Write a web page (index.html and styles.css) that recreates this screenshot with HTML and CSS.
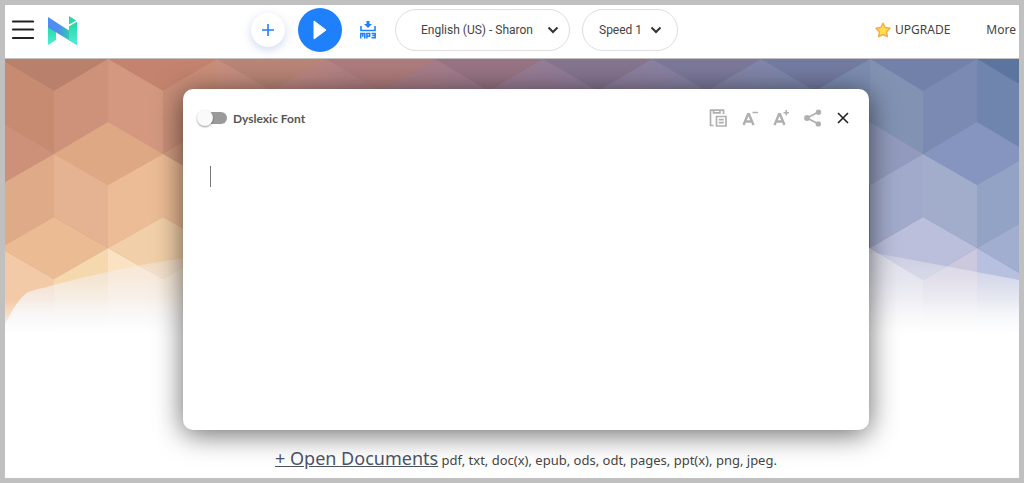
FILE: index.html
```html
<!DOCTYPE html>
<html lang="en">
<head>
<meta charset="utf-8">
<meta name="viewport" content="width=device-width, initial-scale=1">
<title>Text to Speech Reader</title>
<link rel="stylesheet" href="styles.css">
</head>
<body>
<div class="app">
  <header class="topbar">
    <button class="icon-btn menu" aria-label="Menu">
      <svg width="22" height="20" viewBox="0 0 22 20" stroke="#222" stroke-width="2.2" stroke-linecap="round"><path d="M1 1.500h20M1 9.500h20M1 18h20"/></svg>
    </button>
    <a class="logo" href="#" aria-label="Home">
      <svg width="32" height="30" viewBox="0 0 32 30">
        <defs>
          <linearGradient id="lg" x1="0" y1="0" x2="0" y2="1"><stop offset="0" stop-color="#22d8a0"/><stop offset="1" stop-color="#52ecd6"/></linearGradient>
          <linearGradient id="lb" x1="0" y1="0" x2="1" y2="0"><stop offset=".35" stop-color="#4f8df0"/><stop offset=".75" stop-color="#2bcfae"/><stop offset="1" stop-color="#4fe9d2"/></linearGradient>
        </defs>
        <path fill="url(#lg)" d="M1 10 9 14V24L1 29z"/>
        <path fill="url(#lg)" d="M22 10.500 30 6V29L22 24z"/>
        <path fill="url(#lb)" d="M1 1 22 14.500 30 20V29L1 11.500z"/>
        <path fill="url(#lg)" d="M22 10.500 30 6V29L22 24z"/>
        <path fill="#25dca0" d="M22 0 29 4.500 22 8.500z"/>
      </svg>
    </a>
    <div class="controls">
      <button class="add" aria-label="Add">
        <svg width="12" height="12" viewBox="0 0 12 12" stroke="#1e80fa" stroke-width="1.6"><path d="M6 0v12M0 6h12"/></svg>
      </button>
      <button class="play" aria-label="Play">
        <svg width="14" height="20" viewBox="0 0 14 20"><path fill="#fff" stroke="#fff" stroke-linejoin="round" d="M1 1 13 10 1 19z"/></svg>
      </button>
      <button class="icon-btn mp3" aria-label="Download MP3">
        <svg width="16" height="18" viewBox="0 0 16 18" fill="none" stroke="#1e80fa">
          <path stroke-width="1.600" d="M1 5v4.500h14V5"/>
          <path fill="#1e80fa" stroke="none" d="M6.500 0h3v3h2.500L8 7 4 3h2.500z"/>
          <path stroke-width="1.500" d="M.8 17.500v-5h4v5M2.800 12.500v3.200M6.900 17.500v-5h2.800v2.800H6.900M11.500 12.500h3.700v4.300h-3.700M12.300 14.600h2.800"/>
        </svg>
      </button>
      <div class="pick voice">
        <select aria-label="Voice"><option>English (US) - Sharon</option></select>
        <svg class="chevron" width="12" height="8" viewBox="0 0 12 8" fill="none" stroke="#333" stroke-width="2"><path d="m1.500 1.500 4.500 4.500 4.500-4.500"/></svg>
      </div>
      <div class="pick speed">
        <select aria-label="Speed"><option>Speed 1</option></select>
        <svg class="chevron" width="12" height="8" viewBox="0 0 12 8" fill="none" stroke="#333" stroke-width="2"><path d="m1.500 1.500 4.500 4.500 4.500-4.500"/></svg>
      </div>
    </div>
    <nav class="links">
      <a href="#">
        <svg width="16" height="16" viewBox="0 0 16 16"><path fill="#ffdf52" stroke="#fba93c" stroke-width="1.400" stroke-linejoin="round" d="m8 1.200 2.200 4.300 4.800.8-3.400 3.500.8 4.900L8 12.500l-4.400 2.200.8-4.900L1 6.300l4.800-.8z"/></svg>
        UPGRADE
      </a>
      <a href="#">More</a>
    </nav>
  </header>

  <main class="hero">
    <svg class="pattern" viewBox="5 59 1014 282" preserveAspectRatio="none" aria-hidden="true">
      <defs>
        <linearGradient id="base" x1="0" x2="1" y1="0" y2="0"><stop offset="0" stop-color="#ce947a"/><stop offset=".2" stop-color="#cb917e"/><stop offset=".38" stop-color="#ab7c84"/><stop offset=".55" stop-color="#927c98"/><stop offset=".8" stop-color="#7b88ae"/><stop offset="1" stop-color="#7188af"/></linearGradient>
        <linearGradient id="wave" gradientUnits="userSpaceOnUse" x1="0" x2="0" y1="245" y2="335"><stop offset="0" stop-color="#f4f2f4" stop-opacity=".2"/><stop offset=".35" stop-color="#f4f2f4" stop-opacity=".5"/><stop offset=".75" stop-color="#f9f9fb" stop-opacity=".88"/><stop offset="1" stop-color="#fff"/></linearGradient>
        <linearGradient id="fade" gradientUnits="userSpaceOnUse" x1="0" x2="0" y1="300" y2="340"><stop offset="0" stop-color="#fff" stop-opacity="0"/><stop offset="1" stop-color="#fff"/></linearGradient>
      </defs>
      <path fill="url(#base)" d="M0 59h1024v282H0z"/>
      <!-- top faces, first row -->
      <path fill="#b9806b" d="M0 59h108L54 91z"/>
      <path fill="#c3836e" d="M108 59h109L163 91z"/>
      <path fill="#b98577" d="M217 59h109L272 91z"/>
      <path fill="#ad7b7b" d="M326 59h109L380 91z"/>
      <path fill="#977483" d="M435 59h108L489 91z"/>
      <path fill="#85758e" d="M543 59h109L598 91z"/>
      <path fill="#7b789a" d="M652 59h109L707 91z"/>
      <path fill="#737ba1" d="M761 59h109L815 91z"/>
      <path fill="#7181aa" d="M870 59h107L923 91z"/>
      <path fill="#5b759f" d="M977 59h47v28z"/>
      <!-- left cubes -->
      <path fill="#c78b72" d="M0 59 54 91V154L0 122z"/>
      <path fill="#cd9279" d="M54 91 108 59V122L54 154z"/>
      <path fill="#d3987f" d="M108 59 163 91V154L108 122z"/>
      <path fill="#c98e78" d="M163 91 217 59V122L163 154z"/>
      <path fill="#cd917a" d="M0 122 54 154 0 185z"/>
      <path fill="#dea885" d="M108 122 163 154 108 185 54 154z"/>
      <path fill="#d09a7e" d="M163 154 217 122V185z"/>
      <path fill="#dfaa87" d="M0 185 54 154V217L0 248z"/>
      <path fill="#e5b391" d="M54 154 108 185V248L54 217z"/>
      <path fill="#ebbc95" d="M108 185 163 154V217L108 248z"/>
      <path fill="#e9ba93" d="M163 154 217 185V248L163 217z"/>
      <path fill="#ebbb94" d="M0 248 54 217 108 248 54 279z"/>
      <path fill="#f1cfa8" d="M108 248 163 217 217 248 163 279z"/>
      <path fill="#f3caa7" d="M0 248 54 279V341H0z"/>
      <path fill="#f5d8ae" d="M54 279 108 248V341H54z"/>
      <path fill="#fae2c2" d="M108 248 163 279V341H108z"/>
      <path fill="#f7dfb9" d="M163 279 217 248V341H163z"/>
      <!-- right cubes -->
      <path fill="#7c8cb1" d="M815 91 870 59V122L815 154z"/>
      <path fill="#8292b3" d="M870 59 923 91V154L870 122z"/>
      <path fill="#7b8ab3" d="M923 91 977 59V122L923 154z"/>
      <path fill="#7085ad" d="M977 59 1024 87V150L977 122z"/>
      <path fill="#929bbd" d="M870 122 923 154 870 185 815 154z"/>
      <path fill="#8695bf" d="M977 122 1031 154 977 185 923 154z"/>
      <path fill="#a1aacb" d="M870 185 923 154V217L870 248z"/>
      <path fill="#a2adcc" d="M923 154 977 185V248L923 217z"/>
      <path fill="#93a3c5" d="M977 185 1031 154V217L977 248z"/>
      <path fill="#bbbfdb" d="M870 248 923 217 977 248 923 280z"/>
      <path fill="#a2aed0" d="M977 248 1031 217V280z"/>
      <path fill="#d5d7e8" d="M815 217 870 248 923 280V341H815z"/>
      <path fill="#ccc9df" d="M923 280 977 248V341H923z"/>
      <path fill="#b7c0df" d="M977 248 1031 280V341H977z"/>
      <!-- pale wave over the lower edge -->
      <path fill="url(#fade)" d="M0 300h1024v42H0z"/>
      <path fill="url(#wave)" d="M5 324Q18 298 28 292C80 278 135 263 217 254L500 240 870 252 1024 281V342H5z"/>
    </svg>

    <section class="editor">
      <div class="editor-bar">
        <label class="switch">
          <input type="checkbox" role="switch">
          <span>Dyslexic Font</span>
        </label>
        <div class="tools">
          <button class="icon-btn" aria-label="Paste">
            <svg width="18" height="18" viewBox="0 0 18 18" fill="none" stroke="#b0b0b0" stroke-width="1.700"><path d="M4.500 16.500H1.500V1.200h13V5M4.500 1.500v2.400h6.500V1.500M7.500 7.500h9.500v9.500H7.500zM9.800 10.700h5M9.800 13.700h5"/></svg>
          </button>
          <button class="icon-btn" aria-label="Decrease text size">
            <svg width="16" height="16" viewBox="0 0 16 16" fill="none" stroke="#b0b0b0"><path stroke-width="2.400" d="M1.500 15 6 4.300h1L11.500 15M3.200 11.500h6.600"/><path stroke-width="1.500" d="M10.500 2.500H16"/></svg>
          </button>
          <button class="icon-btn" aria-label="Increase text size">
            <svg width="16" height="16" viewBox="0 0 16 16" fill="none" stroke="#b0b0b0"><path stroke-width="2.400" d="M1.500 15 6 4.300h1L11.500 15M3.200 11.500h6.600"/><path stroke-width="1.500" d="M10.500 2.700H16M13.200 0v5.500"/></svg>
          </button>
          <button class="icon-btn" aria-label="Share">
            <svg width="18" height="18" viewBox="0 0 18 18" fill="#b0b0b0"><path fill="none" stroke="#b0b0b0" stroke-width="1.700" d="M14.500 3 3 9l11.500 6"/><circle cx="14.500" cy="3.200" r="2.700"/><circle cx="3" cy="9" r="2.900"/><circle cx="14.300" cy="14.900" r="2.700"/></svg>
          </button>
          <button class="icon-btn" aria-label="Close">
            <svg width="12" height="12" viewBox="0 0 12 12" stroke="#222" stroke-width="1.600"><path d="m1 1 10 10M11 1 1 11"/></svg>
          </button>
        </div>
      </div>
      <textarea class="text" aria-label="Text to read" autofocus></textarea>
      <span class="caret" aria-hidden="true"></span>
    </section>

    <p class="documents"><a href="#">+ Open Documents</a> <span>pdf, txt, doc(x), epub, ods, odt, pages, ppt(x), png, jpeg.</span></p>
  </main>
</div>
</body>
</html>
```
FILE: styles.css
```css
* { box-sizing: border-box; }

body {
  margin: 0;
  padding: 5px;
  min-height: 100vh;
  display: flex;
  background: #c0c0c0;
  color: #444;
  font-family: "Noto Sans", "Open Sans", sans-serif;
  font-size: 12px;
}

button {
  border: 0;
  padding: 0;
  background: none;
  display: grid;
  place-items: center;
  cursor: pointer;
}

svg { display: block; }

.app {
  flex: 1;
  min-width: 0;
  display: flex;
  flex-direction: column;
  background: #fff;
}

.topbar {
  height: 54px;
  flex: none;
  display: flex;
  align-items: center;
  padding: 0 3px 4px 7px;
  border-bottom: 1px solid #c4bfc0;
}

.logo { margin: 2px 0 0 13px; }

.controls {
  display: flex;
  align-items: center;
  margin-left: 172px;
}

.add {
  width: 34px;
  height: 34px;
  border-radius: 50%;
  background: #fff;
  box-shadow: 0 3px 10px rgba(60, 100, 190, .25);
}

.play {
  width: 44px;
  height: 44px;
  margin: 0 18px 0 13px;
  border-radius: 50%;
  background: #1e80fa;
}

.pick {
  display: grid;
  align-items: center;
}

.pick > * { grid-area: 1 / 1; }

.pick select {
  appearance: none;
  width: 100%;
  height: 42px;
  border: 1px solid #dedede;
  border-radius: 21px;
  background: #fff;
  color: #444;
  font-family: Roboto, sans-serif;
  font-size: 12px;
}

.voice { width: 175px; margin: 0 12px 0 19px; }
.voice select { padding: 0 36px 0 25px; }
.speed { width: 96px; }
.speed select { padding: 0 32px 0 16px; }

.chevron {
  justify-self: end;
  margin-right: 11px;
  pointer-events: none;
}

.speed .chevron { margin-right: 16px; }

.links {
  margin-left: auto;
  display: flex;
  gap: 36px;
}

.links a {
  display: flex;
  align-items: center;
  gap: 4px;
  color: #444;
  text-decoration: none;
}

.hero {
  flex: 1;
  display: grid;
  grid-template-columns: minmax(0, 1fr);
  grid-template-rows: 371px auto;
  overflow: hidden;
}

.pattern {
  grid-area: 1 / 1;
  width: 100%;
  height: 282px;
}

.editor {
  grid-area: 1 / 1;
  position: relative;
  width: 68%;
  margin: 30px 0 0 178px;
  max-width: 686px;
  display: flex;
  flex-direction: column;
  border-radius: 10px;
  background: #fff;
  box-shadow: 0 4px 28px rgba(0, 0, 0, .6);
}

.editor-bar {
  display: flex;
  align-items: center;
  justify-content: space-between;
  padding: 20px 20px 0 16px;
}

.switch {
  display: flex;
  align-items: center;
  gap: 6px;
  font: 700 12px Lato, sans-serif;
  color: #555;
}

.switch input {
  appearance: none;
  width: 28px;
  height: 12px;
  margin: 0;
  display: flex;
  align-items: center;
  background: #9a9a9a;
  border-radius: 6px;
}

.switch input::before {
  content: "";
  flex: none;
  width: 16px;
  height: 16px;
  margin-left: -2px;
  border-radius: 50%;
  background: #fafafa;
  box-shadow: 0 1px 2px rgba(0, 0, 0, .4);
}

.tools {
  display: flex;
  align-items: center;
  gap: 15px;
}

.text {
  flex: 1;
  margin: 36px 20px 20px 26px;
  border: 0;
  padding: 0;
  outline: 0;
  resize: none;
  caret-color: transparent;
  font: 18px "Noto Sans", sans-serif;
}

.caret {
  position: absolute;
  top: 77px;
  left: 27px;
  width: 1px;
  height: 21px;
  background: #777;
}

.documents {
  position: relative;
  margin: 0;
  padding-top: 16px;
  padding-left: 28px;
  text-align: center;
  line-height: 24px;
  font-size: 13px;
  white-space: nowrap;
}

.documents a {
  font-size: 18px;
  color: #4a5266;
}
```
